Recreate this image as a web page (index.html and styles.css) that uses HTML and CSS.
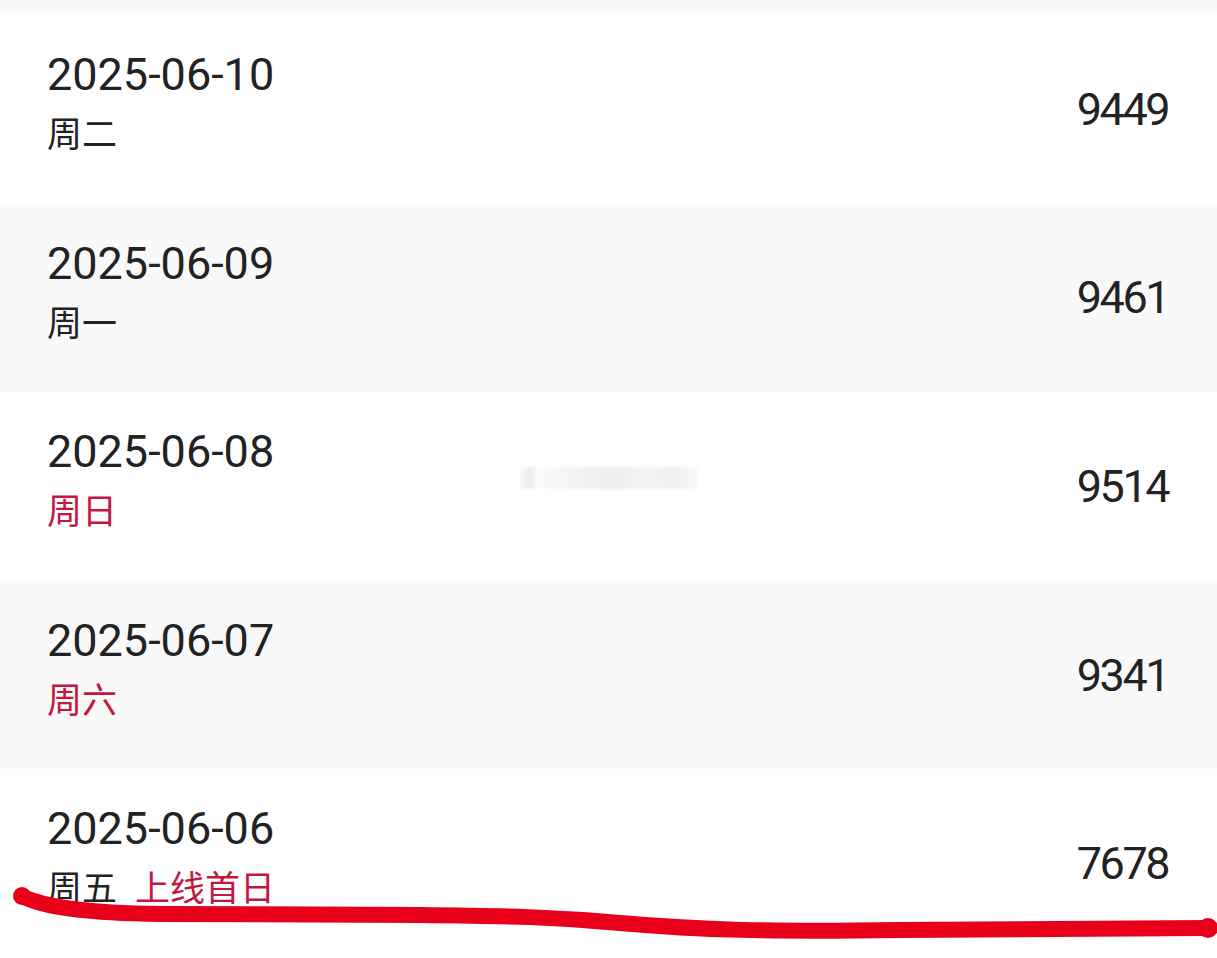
FILE: index.html
```html
<!DOCTYPE html>
<html lang="zh-CN">
<head>
<meta charset="utf-8">
<title>每日数据</title>
<link rel="stylesheet" href="styles.css">
</head>
<body>
<div class="page">
  <div class="top-strip"></div>
  <div class="list">
    <div class="row row-white">
      <div class="left">
        <div class="date">2025-06-10</div>
        <div class="week">周二</div>
      </div>
      <div class="value">9449</div>
    </div>
    <div class="row row-gray">
      <div class="left">
        <div class="date">2025-06-09</div>
        <div class="week">周一</div>
      </div>
      <div class="value">9461</div>
    </div>
    <div class="row row-white">
      <div class="left">
        <div class="date">2025-06-08</div>
        <div class="week weekend">周日</div>
      </div>
      <div class="smudge"></div>
      <div class="value">9514</div>
    </div>
    <div class="row row-gray">
      <div class="left">
        <div class="date">2025-06-07</div>
        <div class="week weekend">周六</div>
      </div>
      <div class="value">9341</div>
    </div>
    <div class="row row-white">
      <div class="left">
        <div class="date">2025-06-06</div>
        <div class="week">周五<span class="tag">上线首日</span></div>
      </div>
      <div class="value">7678</div>
    </div>
  </div>
  <svg class="scribble" width="1217" height="958" viewBox="0 0 1217 958" aria-hidden="true">
    <path d="M22 896 C 45 908, 90 913, 160 914 L 420 915 C 510 916, 555 917, 620 923 C 700 930, 770 932, 900 930 L 1209 928" fill="none" stroke="#e8001b" stroke-width="16" stroke-linecap="round" stroke-linejoin="round"/>
    <circle cx="22" cy="896" r="9" fill="#e8001b"/>
    <circle cx="1208" cy="928" r="10" fill="#e8001b"/>
  </svg>
</div>
</body>
</html>
```

FILE: styles.css
```css
* { box-sizing: border-box; }
html, body {
  margin: 0;
  padding: 0;
  background: #ffffff;
}
body {
  font-family: Roboto, "Noto Sans CJK SC", sans-serif;
  color: #222222;
}
.page {
  position: relative;
  width: 1217px;
  height: 958px;
  overflow: hidden;
}
.top-strip {
  height: 15px;
  background: #f9f9f9;
}
.list {
  display: flex;
  flex-direction: column;
}
.row {
  position: relative;
  height: 188.6px;
  display: flex;
  justify-content: space-between;
  align-items: flex-start;
  padding: 33px 49px 0 47px;
}
.row-white { background: #ffffff; }
.row-gray { background: #f9f9f9; }
.left {
  display: flex;
  flex-direction: column;
  gap: 14px;
}
.date {
  font-family: Roboto, sans-serif;
  font-size: 45px;
  line-height: 53px;
  letter-spacing: 0;
  color: #222222;
}
.week {
  font-family: "Noto Sans CJK SC", sans-serif;
  font-size: 35px;
  line-height: 34px;
  color: #222222;
}
.weekend { color: #c4173f; }
.tag {
  color: #c4173f;
  margin-left: 18px;
}
.value {
  align-self: center;
  margin-top: -33px;
  font-family: Roboto, sans-serif;
  font-size: 45px;
  line-height: 53px;
  letter-spacing: -2.5px;
  color: #222222;
}
.smudge {
  position: absolute;
  left: 520px;
  top: 75px;
  width: 178px;
  height: 22px;
  background: linear-gradient(90deg, #f4f4f4 0, #e8e8e8 6%, #fbfbfb 10%, #f0f0f0 30%, #e9e9e9 55%, #f2f2f2 70%, #ececec 85%, #f6f6f6 100%);
  filter: blur(1.5px);
  opacity: 0.8;
}
.scribble {
  position: absolute;
  left: 0;
  top: 0;
  pointer-events: none;
}
```
